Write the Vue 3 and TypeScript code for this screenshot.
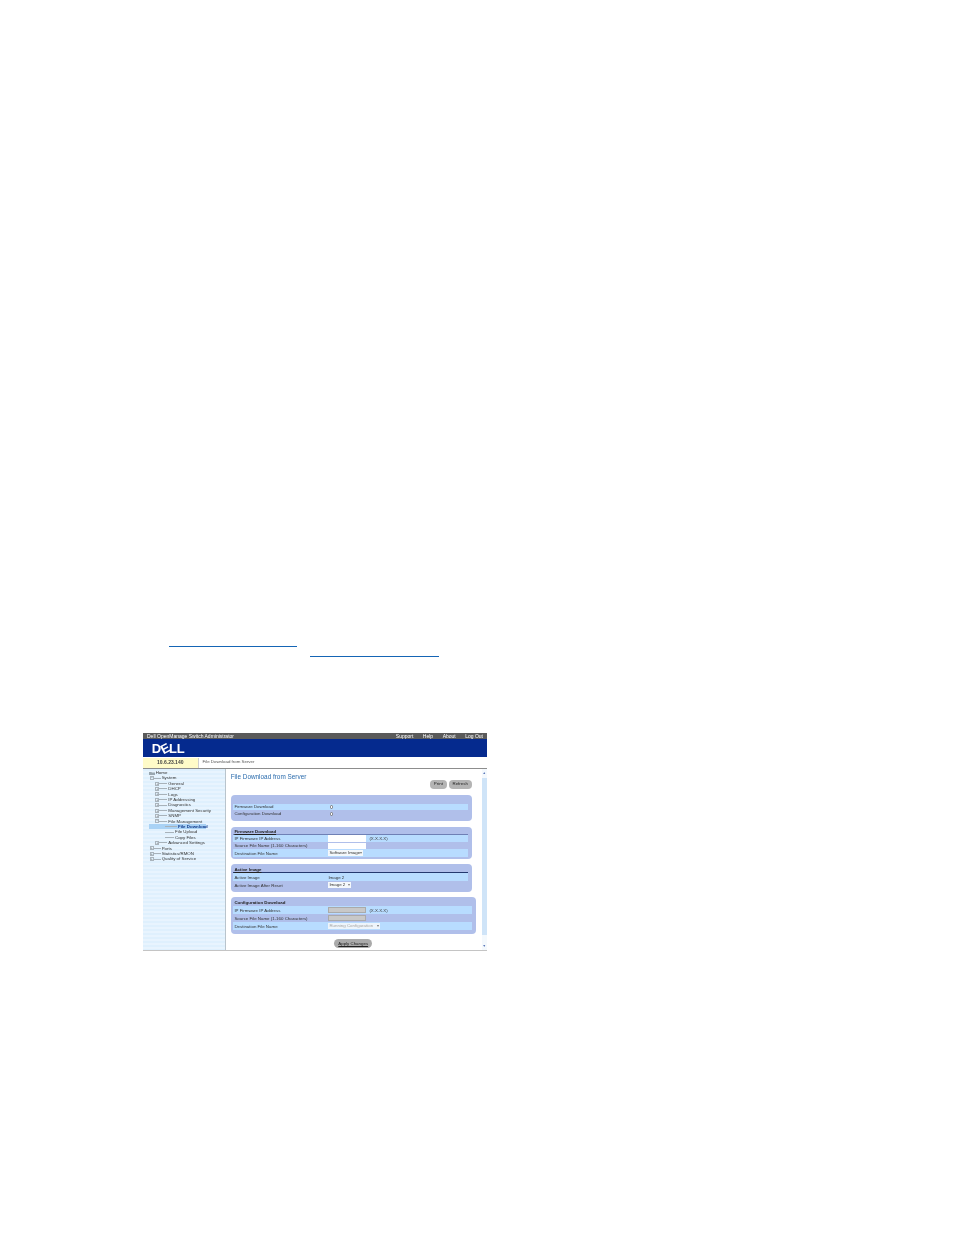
<script setup lang="ts">
interface TreeRow { label: string; depth: number; sign: string; active?: boolean }
const tree: TreeRow[] = [
  { label: 'System', depth: 1, sign: '−' },
  { label: 'General', depth: 2, sign: '+' },
  { label: 'DHCP', depth: 2, sign: '+' },
  { label: 'Logs', depth: 2, sign: '+' },
  { label: 'IP Addressing', depth: 2, sign: '+' },
  { label: 'Diagnostics', depth: 2, sign: '+' },
  { label: 'Management Security', depth: 2, sign: '+' },
  { label: 'SNMP', depth: 2, sign: '+' },
  { label: 'File Management', depth: 2, sign: '−' },
  { label: 'File Download', depth: 3, sign: '', active: true },
  { label: 'File Upload', depth: 3, sign: '' },
  { label: 'Copy Files', depth: 3, sign: '' },
  { label: 'Advanced Settings', depth: 2, sign: '+' },
  { label: 'Ports', depth: 1, sign: '+' },
  { label: 'Statistics/RMON', depth: 1, sign: '+' },
  { label: 'Quality of Service', depth: 1, sign: '+' }
]
</script>

<template>
  <div class="page">
    <div class="links">
      <a class="link link-a"></a>
      <a class="link link-b"></a>
    </div>
    <div class="shot">
      <div class="topbar">
        <span>Dell OpenManage Switch Administrator</span>
        <span class="toplinks"><i>Support</i><i>Help</i><i>About</i><i>Log Out</i></span>
      </div>
      <div class="brand"><span class="logo">D<em>E</em>LL</span></div>
      <div class="tabs">
        <div class="ip">10.6.23.140</div>
        <div class="crumb">File Download from Server</div>
      </div>
      <div class="body">
        <nav class="side">
          <div class="node home">
            <svg class="home-icon" viewBox="0 0 6 4" width="6" height="4"><path d="M0 1h2.4l.5.6H6V4H0z" fill="#9aa7b0" /></svg>
            <span>Home</span>
          </div>
          <div v-for="r in tree" :key="r.label" class="node" :class="['d' + r.depth, { active: r.active }]">
            <b class="sign" :class="{ boxed: r.sign }">{{ r.sign }}</b><span class="dash"></span><span>{{ r.label }}</span>
          </div>
        </nav>
        <main class="content">
          <h1>File Download from Server</h1>
          <div class="actions">
            <button>Print</button><button>Refresh</button>
          </div>

          <section class="panel p1">
            <div class="row"><label>Firmware Download</label><span class="radio"></span></div>
            <div class="row alt"><label>Configuration Download</label><span class="radio"></span></div>
          </section>

          <section class="panel p2">
            <div class="head">Firmware Download</div>
            <div class="row"><label>IP Firmware IP Address</label><span class="input"></span><span class="note">(X.X.X.X)</span></div>
            <div class="row alt"><label>Source File Name (1-160 Characters)</label><span class="input"></span></div>
            <div class="row"><label>Destination File Name</label><span class="select s-image">Software Image<small>▾</small></span></div>
          </section>

          <section class="panel p3">
            <div class="head dark">Active Image</div>
            <div class="row"><label>Active Image</label><span class="val">Image 2</span></div>
            <div class="row alt"><label>Active Image After Reset</label><span class="select s-reset">Image 2<small>▾</small></span></div>
          </section>

          <section class="panel p4">
            <div class="head plain">Configuration Download</div>
            <div class="row"><label>IP Firmware IP Address</label><span class="input off"></span><span class="note">(X.X.X.X)</span></div>
            <div class="row alt"><label>Source File Name (1-160 Characters)</label><span class="input off"></span></div>
            <div class="row"><label>Destination File Name</label><span class="select off s-run">Running Configuration<small>▾</small></span></div>
          </section>

          <div class="apply"><button>Apply Changes</button></div>
        </main>
        <div class="scroll">
          <span class="arrow">▲</span>
          <span class="track"></span>
          <span class="arrow">▼</span>
        </div>
      </div>
    </div>
  </div>
</template>

<style>
html, body { margin: 0; background: #fff; }
</style>

<style scoped>
.page { width: 954px; height: 1235px; background: #fff; overflow: hidden; font-family: "Liberation Sans", Arial, sans-serif; }
.links { display: flex; flex-direction: column; gap: 9.5px; padding: 645.5px 0 0 169px; height: 14.5px; }
.link { display: block; height: 1.2px; background: #1565b5; width: 128px; }
.link-b { margin-left: 141px; width: 129px; }
.shot { margin: 72.5px 0 0 143px; width: 344px; height: 218px; display: flex; flex-direction: column; font-size: 4.4px; color: #333; border-bottom: 1px solid #c4c4c4; box-sizing: border-box; filter: blur(0.35px); }
.topbar { height: 6.3px; flex: none; background: #5a5a5a; color: #fff; display: flex; justify-content: space-between; align-items: center; padding: 0 4px; line-height: 6px; font-size: 5px; }
.toplinks { display: flex; gap: 9.5px; }
.toplinks i { font-style: normal; }
.brand { height: 18.6px; flex: none; background: #052a8e; display: flex; align-items: center; padding-left: 8.7px; }
.logo { color: #fff; font: 700 13px/1 "Liberation Sans", sans-serif; letter-spacing: -0.35px; }
.logo em { display: inline-block; font-style: normal; transform: rotate(-28deg); }
.tabs { height: 10.4px; display: flex; border-bottom: 1px solid #8d8d8d; box-sizing: content-box; flex: none; }
.ip { width: 54.5px; margin-top: 1px; background: #fffbc8; text-align: center; line-height: 9.4px; font-size: 5px; font-weight: 700; color: #444; border-right: 1px solid #cfcfcf; }
.crumb { padding-left: 4px; line-height: 10.4px; color: #555; }
.body { flex: 1; display: flex; min-height: 0; }
.side { width: 82px; background: repeating-linear-gradient(#dff0fd 0 2px, #e8f4fe 2px 4px); border-right: 1px solid #b9c4cc; padding-top: 1.3px; box-sizing: content-box; flex: none; }
.node { height: 5.4px; line-height: 5.4px; display: flex; align-items: center; white-space: nowrap; color: #333; }
.home { padding-left: 5.5px; }
.home-icon { margin-right: 1.2px; }
.sign { width: 4px; height: 4px; flex: none; font-weight: 400; font-size: 3.6px; line-height: 3.4px; text-align: center; color: #666; box-sizing: border-box; }
.sign.boxed { border: 0.5px solid #aab4bc; }
.dash { height: 0; flex: none; border-top: 0.7px solid #a8b2ba; margin-right: 1px; }
.d1 { padding-left: 6.7px; }
.d1 .dash { width: 7px; }
.d2 { padding-left: 12.3px; }
.d2 .dash { width: 8px; }
.d3 { padding-left: 18px; }
.d3 .dash { width: 9px; }
.active { background: #a9d2f5; color: #123a8a; font-weight: 700; margin-left: 6px; padding-left: 12px; width: 56.7px; box-sizing: border-box; }
.active .dash { width: 12px; }
.content { flex: 1; min-width: 0; padding: 4px 0 0 4.7px; }
h1 { margin: 0; font-size: 6.4px; line-height: 7.5px; font-weight: 400; color: #2b6cad; }
.actions { display: flex; justify-content: flex-end; gap: 2px; width: 241px; height: 14.8px; }
button { border: 0; background: #b4b4b4; color: #222; border-radius: 4px; font: 4.4px/8px "Liberation Sans", sans-serif; padding: 0; height: 8.3px; }
.actions button:first-child { width: 16.7px; }
.actions button:last-child { width: 23px; }
.panel { width: 241px; background: #b0bfea; border-radius: 4px; padding: 0 3.4px 0 2.7px; box-sizing: border-box; }
.p1 { padding-top: 8.5px; height: 26px; margin-bottom: 5.7px; }
.p1 .row { height: 6.8px; }
.p2 { padding-top: 3px; height: 31.9px; margin-bottom: 5.4px; }
.p2 .row { height: 7.3px; }
.p3 { padding-top: 4px; height: 27.7px; margin-bottom: 5px; }
.p3 .row { height: 8px; }
.p4 { padding-top: 4.5px; height: 37.3px; width: 245px; }
.p4 .row { height: 8px; }
.p4 label { width: 95px; }
.head { height: 5px; box-sizing: border-box; font-weight: 700; line-height: 4px; text-decoration: underline; color: #222; border-bottom: 1px solid #6f80b5; padding-left: 1px; }
.head.dark { border-bottom-color: #24386e; }
.head.plain { border-bottom: 0; text-decoration: none; }
.row { display: flex; align-items: center; background: #b8dcff; color: #333; padding-left: 1px; }
.row.alt { background: transparent; }
.row label { width: 94px; flex: none; }
.radio { width: 3.6px; height: 3.6px; border: 0.6px solid #777; border-radius: 50%; background: #fff; margin-left: 1.4px; box-sizing: border-box; }
.input { width: 38px; height: 6.4px; background: #fff; flex: none; }
.input.off { background: #c8c8c8; border: 0.5px solid #aaa; box-sizing: border-box; }
.note { margin-left: 3px; color: #444; }
.select { display: flex; justify-content: space-between; box-sizing: border-box; background: #f4f8fb; color: #333; padding: 0 1px; line-height: 5.5px; height: 5.5px; white-space: nowrap; overflow: hidden; }
.select small { font-size: 4px; line-height: 5.5px; color: #777; }
.s-image { width: 35px; }
.s-reset { width: 23px; }
.s-run { width: 52px; }
.select.off { color: #a5a5a5; background: #eef5fb; }
.val { color: #333; }
.apply { width: 245px; display: flex; justify-content: center; margin-top: 5px; }
.apply button { width: 38px; height: 9px; border-radius: 5px; background: #aaa; text-decoration: underline; }
.scroll { width: 5px; margin-right: 0.3px; flex: none; display: flex; flex-direction: column; background: #f4f9fd; text-align: center; padding: 2px 0 1.5px; box-sizing: border-box; }
.arrow { height: 4.5px; line-height: 4.5px; color: #5572b5; font-size: 3.5px; }
.track { flex: 1; background: linear-gradient(#f4f9fd 0 3px, #cfe4f8 3px calc(100% - 9px), #f4f9fd calc(100% - 9px)); }
</style>
